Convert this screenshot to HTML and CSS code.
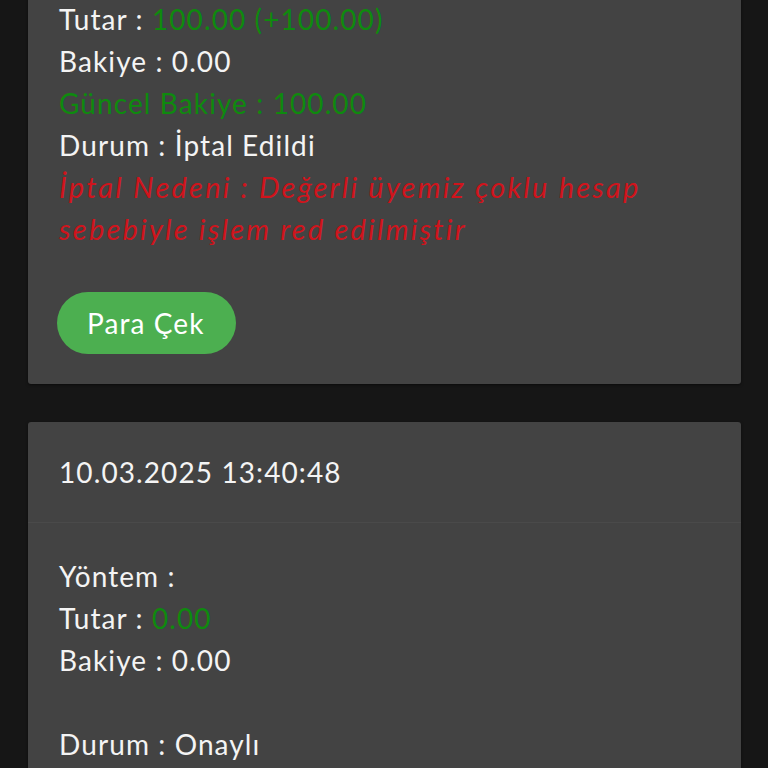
FILE: index.html
```html
<!DOCTYPE html>
<html lang="tr">
<head>
<meta charset="utf-8">
<link rel="stylesheet" href="styles.css">
</head>
<body>
<div class="list">
  <div class="card">
    <div class="card-head">10.03.2025 13:12:05</div>
    <div class="card-body">
      <div class="line">Yöntem : Papara</div>
      <div class="line">Tutar : <span class="green">100.00 (+100.00)</span></div>
      <div class="line">Bakiye : 0.00</div>
      <div class="line green">Güncel Bakiye : 100.00</div>
      <div class="line">Durum : İptal Edildi</div>
      <div class="line red">İptal Nedeni : Değerli üyemiz çoklu hesap sebebiyle işlem red edilmiştir</div>
      <div class="actions"><button class="btn">Para Çek</button></div>
    </div>
  </div>
  <div class="card">
    <div class="card-head">10.03.2025 13:40:48</div>
    <div class="card-body">
      <div class="line">Yöntem : </div>
      <div class="line">Tutar : <span class="green">0.00</span></div>
      <div class="line">Bakiye : 0.00</div>
      <div class="line blank"></div>
      <div class="line">Durum : Onaylı</div>
    </div>
  </div>
</div>
</body>
</html>
```

FILE: styles.css
```css
html, body {
  margin: 0;
  padding: 0;
  background: #161616;
  overflow: hidden;
}
body {
  font-family: Lato, "Noto Sans", sans-serif;
  font-weight: 400;
  color: #f4f4f4;
  font-size: 28px;
  letter-spacing: 1.1px;
}
.list {
  margin-top: -177px;
  padding: 0 27px 0 28px;
  display: flex;
  flex-direction: column;
  gap: 38px;
}
.card {
  background: #434343;
  border-radius: 3px;
  box-shadow: 0 1px 3px rgba(0,0,0,0.5);
}
.card-head {
  padding: 29px 31px 29px 31px;
  line-height: 42px;
  border-bottom: 1px solid #4a4a4a;
}
.card-body {
  padding: 32px 31px 30px 31px;
}
.line {
  line-height: 42px;
  min-height: 42px;
}
.green { color: #0e8a0e; }
.red {
  color: #d0141c;
  font-style: italic;
  font-size: 29px;
  letter-spacing: 2.2px;
  max-width: 600px;
}
.actions {
  margin-top: 42px;
}
.btn {
  font-family: inherit;
  font-weight: 400;
  font-size: 28px;
  letter-spacing: 1.1px;
  color: #ffffff;
  background: #4caf50;
  border: none;
  border-radius: 31px;
  height: 62px;
  padding: 0 31px 0 30px;
  margin-left: -2px;
}
```
